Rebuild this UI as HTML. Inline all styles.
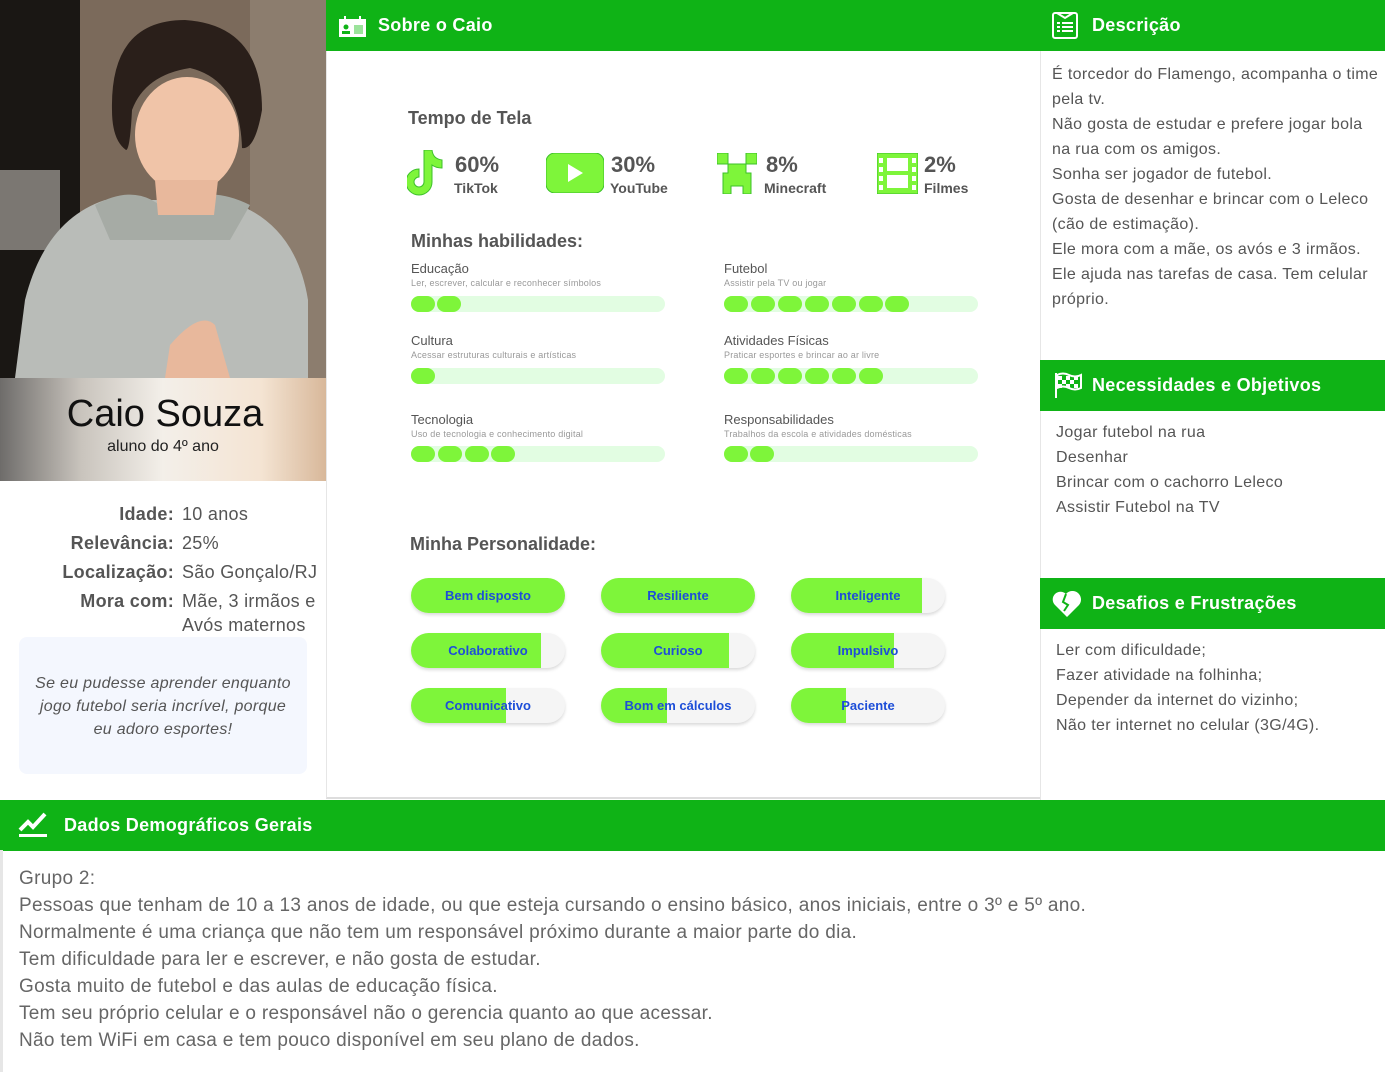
<!DOCTYPE html>
<html><head><meta charset="utf-8"><style>
*{margin:0;padding:0;box-sizing:border-box}
body{width:1385px;height:1072px;position:relative;background:#fff;font-family:"Liberation Sans","DejaVu Sans",sans-serif;color:#555;overflow:hidden}
.a{position:absolute}
.hdr{position:absolute;background:#0fb316;color:#fff;font-weight:bold;font-size:18px;height:51px;display:flex;align-items:center;letter-spacing:.3px}
.trk{position:absolute;width:254px;height:16px;border-radius:8px;background:#e2fde2}
.dot{position:absolute;top:0;width:24px;height:16px;border-radius:8px;background:#7ef53a}
.sk{position:absolute;font-size:13px;color:#555}
.sk small{display:block;font-size:9px;color:#999;margin-top:2px;letter-spacing:.2px}
.pill{position:absolute;width:154px;height:35px;border-radius:18px;background:#f5f5f5;overflow:hidden;box-shadow:0 2px 3px rgba(0,0,0,.15)}
.pill i{position:absolute;left:0;top:0;bottom:0;background:#7ef53a}
.pill span{position:absolute;left:0;right:0;top:0;line-height:35px;text-align:center;color:#1d4ed8;font-size:13px;font-weight:bold}
.txt{font-size:16px;line-height:25px;color:#555;letter-spacing:.35px}
.st{position:absolute;font-weight:bold;color:#555}
</style></head><body>

<svg class="a" style="left:0;top:0" width="326" height="378" viewBox="0 0 326 378">
<rect width="326" height="378" fill="#6a5a4c"/>
<rect width="80" height="378" fill="#1a1714"/>
<rect x="0" y="170" width="60" height="80" fill="#bdb8b0" opacity=".6"/>
<rect x="80" width="246" height="378" fill="#7b6a5b"/>
<rect x="250" width="76" height="378" fill="#8c7d6e"/>
<path d="M15 378 L25 300 Q45 220 105 200 L225 200 Q295 220 308 300 L308 378Z" fill="#b9bcb8"/>
<path d="M95 205 Q140 180 170 215 Q200 180 250 205 L230 240 L110 240Z" fill="#a6aba5"/>
<ellipse cx="187" cy="135" rx="52" ry="58" fill="#f0c4a8"/>
<path d="M112 110 Q110 20 185 20 Q262 25 262 110 Q255 150 242 148 Q240 80 190 68 Q145 75 132 110 Q130 150 126 150 Q112 140 112 110Z" fill="#2a1f1a"/>
<path d="M155 180 L218 180 L214 215 L158 215Z" fill="#e8b89c"/>
<path d="M170 345 Q200 310 215 325 L230 378 L165 378Z" fill="#e8b89c"/>
</svg>
<div class="a" style="left:0;top:378px;width:326px;height:103px;background:linear-gradient(90deg,#6e6c6a 0%,#c9c4bd 25%,#f3efe9 50%,#f4e4d3 80%,#d8b89a 100%)"></div>
<div class="a" style="left:0;top:393px;width:330px;text-align:center;font-size:38px;color:#111">Caio Souza</div>
<div class="a" style="left:0;top:438px;width:326px;text-align:center;font-size:16px;color:#222">aluno do 4º ano</div>

<div class="a" style="left:0;top:500px;width:174px;text-align:right;font-size:18px;line-height:29px;font-weight:bold;color:#555;letter-spacing:.3px">Idade:<br>Relevância:<br>Localização:<br>Mora com:</div>
<div class="a" style="left:182px;top:500px;width:150px;font-size:18px;line-height:29px;color:#555;letter-spacing:.3px">10 anos<br>25%<br>São Gonçalo/RJ<br>Mãe, 3 irmãos e<br><span style="position:relative;top:-5px">Avós maternos</span></div>
<div class="a" style="left:19px;top:637px;width:288px;height:137px;background:#f4f7fe;border-radius:8px;font-style:italic;font-size:16px;line-height:23px;text-align:center;padding:35px 14px 0;color:#555;letter-spacing:.3px">Se eu pudesse aprender enquanto jogo futebol seria incrível, porque eu adoro esportes!</div>

<div class="hdr" style="left:326px;top:0;width:714px;padding-left:52px">Sobre o Caio</div>
<svg class="a" style="left:339px;top:16px" width="28" height="22" viewBox="0 0 28 22"><rect x="0" y="3" width="27" height="18" fill="#fff"/><rect x="5" y="0" width="2" height="5" fill="#fff"/><rect x="20" y="0" width="2" height="5" fill="#fff"/><circle cx="7" cy="11" r="2.5" fill="#0fb316"/><rect x="3" y="15" width="8" height="3" fill="#0fb316"/><rect x="15" y="9" width="9" height="9" fill="#9be39b"/></svg>
<div class="a" style="left:326px;top:51px;width:714px;height:748px;border-left:1px solid #e6e6e6;border-bottom:2px solid #ddd"></div>

<div class="st" style="left:408px;top:108px;font-size:18px">Tempo de Tela</div>
<svg class="a" style="left:407px;top:150px" width="40" height="46" viewBox="0 0 40 46"><path d="M17 0h8q1 9 10 10v8q-6 0-10-3v17a13 13 0 1 1-13-13v8a5 5 0 1 0 5 5z" fill="#7ef53a" stroke="#3cc02a" stroke-width="1"/></svg>
<div class="st" style="left:455px;top:152px;font-size:22px">60%</div><div class="st" style="left:454px;top:180px;font-size:14px">TikTok</div>
<svg class="a" style="left:546px;top:153px" width="58" height="40" viewBox="0 0 58 40"><rect width="58" height="40" rx="9" fill="#7ef53a" stroke="#3cc02a"/><path d="M22 11l15 9-15 9z" fill="#fff"/></svg>
<div class="st" style="left:611px;top:152px;font-size:22px">30%</div><div class="st" style="left:610px;top:180px;font-size:14px">YouTube</div>
<svg class="a" style="left:717px;top:153px" width="40" height="41" viewBox="0 0 40 41"><path d="M0 0h11v11h-11zM29 0h11v11h-11zM11 11h18v9h5v21h-8v-8h-12v8h-8v-21h5z" fill="#7ef53a" stroke="#3cc02a"/></svg>
<div class="st" style="left:766px;top:152px;font-size:22px">8%</div><div class="st" style="left:764px;top:180px;font-size:14px">Minecraft</div>
<svg class="a" style="left:877px;top:153px" width="41" height="41" viewBox="0 0 41 41"><rect width="41" height="41" fill="#7ef53a" stroke="#3cc02a"/><rect x="10" y="5" width="21" height="13" fill="#fff"/><rect x="10" y="22" width="21" height="13" fill="#fff"/><g fill="#fff"><rect x="2" y="5" width="4" height="5"/><rect x="2" y="14" width="4" height="5"/><rect x="2" y="23" width="4" height="5"/><rect x="2" y="32" width="4" height="5"/><rect x="35" y="5" width="4" height="5"/><rect x="35" y="14" width="4" height="5"/><rect x="35" y="23" width="4" height="5"/><rect x="35" y="32" width="4" height="5"/></g></svg>
<div class="st" style="left:924px;top:152px;font-size:22px">2%</div><div class="st" style="left:924px;top:180px;font-size:14px">Filmes</div>

<div class="st" style="left:411px;top:231px;font-size:18px">Minhas habilidades:</div>

<div class="sk" style="left:411px;top:261px">Educação<small>Ler, escrever, calcular e reconhecer símbolos</small></div>
<div class="trk" style="left:411px;top:296px"><div class="dot" style="left:0"></div><div class="dot" style="left:26px"></div></div>
<div class="sk" style="left:724px;top:261px">Futebol<small>Assistir pela TV ou jogar</small></div>
<div class="trk" style="left:724px;top:296px"><div class="dot" style="left:0"></div><div class="dot" style="left:27px"></div><div class="dot" style="left:54px"></div><div class="dot" style="left:81px"></div><div class="dot" style="left:108px"></div><div class="dot" style="left:135px"></div><div class="dot" style="left:161px"></div></div>

<div class="sk" style="left:411px;top:333px">Cultura<small>Acessar estruturas culturais e artísticas</small></div>
<div class="trk" style="left:411px;top:368px"><div class="dot" style="left:0"></div></div>
<div class="sk" style="left:724px;top:333px">Atividades Físicas<small>Praticar esportes e brincar ao ar livre</small></div>
<div class="trk" style="left:724px;top:368px"><div class="dot" style="left:0"></div><div class="dot" style="left:27px"></div><div class="dot" style="left:54px"></div><div class="dot" style="left:81px"></div><div class="dot" style="left:108px"></div><div class="dot" style="left:135px"></div></div>

<div class="sk" style="left:411px;top:412px">Tecnologia<small>Uso de tecnologia e conhecimento digital</small></div>
<div class="trk" style="left:411px;top:446px"><div class="dot" style="left:0"></div><div class="dot" style="left:27px"></div><div class="dot" style="left:54px"></div><div class="dot" style="left:80px"></div></div>
<div class="sk" style="left:724px;top:412px">Responsabilidades<small>Trabalhos da escola e atividades domésticas</small></div>
<div class="trk" style="left:724px;top:446px"><div class="dot" style="left:0"></div><div class="dot" style="left:26px"></div></div>

<div class="st" style="left:410px;top:534px;font-size:18px">Minha Personalidade:</div>
<div class="pill" style="left:411px;top:578px"><i style="width:154px"></i><span>Bem disposto</span></div>
<div class="pill" style="left:601px;top:578px"><i style="width:154px"></i><span>Resiliente</span></div>
<div class="pill" style="left:791px;top:578px"><i style="width:131px"></i><span>Inteligente</span></div>
<div class="pill" style="left:411px;top:633px"><i style="width:130px"></i><span>Colaborativo</span></div>
<div class="pill" style="left:601px;top:633px"><i style="width:128px"></i><span>Curioso</span></div>
<div class="pill" style="left:791px;top:633px"><i style="width:103px"></i><span>Impulsivo</span></div>
<div class="pill" style="left:411px;top:688px"><i style="width:95px"></i><span>Comunicativo</span></div>
<div class="pill" style="left:601px;top:688px"><i style="width:66px"></i><span>Bom em cálculos</span></div>
<div class="pill" style="left:791px;top:688px"><i style="width:55px"></i><span>Paciente</span></div>

<div class="a" style="left:1040px;top:0;width:1px;height:800px;background:#e6e6e6"></div>
<div class="hdr" style="left:1040px;top:0;width:345px;padding-left:52px">Descrição</div>
<svg class="a" style="left:1052px;top:12px" width="26" height="27" viewBox="0 0 26 27"><rect x="1" y="1" width="24" height="25" rx="2" fill="none" stroke="#fff" stroke-width="2"/><path d="M5 1l8 5 8-5" fill="none" stroke="#fff" stroke-width="2"/><path d="M5 11h3M10 11h11M5 15h3M10 15h11M5 19h3M10 19h11" stroke="#fff" stroke-width="2"/></svg>
<div class="a txt" style="left:1052px;top:62px;width:330px">É torcedor do Flamengo, acompanha o time pela tv.<br>Não gosta de estudar e prefere jogar bola na rua com os amigos.<br>Sonha ser jogador de futebol.<br>Gosta de desenhar e brincar com o Leleco (cão de estimação).<br>Ele mora com a mãe, os avós e 3 irmãos.<br>Ele ajuda nas tarefas de casa. Tem celular próprio.</div>

<div class="hdr" style="left:1040px;top:360px;width:345px;padding-left:52px">Necessidades e Objetivos</div>
<svg class="a" style="left:1054px;top:372px" width="28" height="26" viewBox="0 0 28 26"><path d="M2 1v25" stroke="#fff" stroke-width="2"/><path d="M3 3q6-3 12 0t12 0v13q-6 3-12 0t-12 0z" fill="none" stroke="#fff" stroke-width="2"/><g fill="#fff"><rect x="4" y="4" width="4" height="4"/><rect x="12" y="4" width="4" height="4"/><rect x="20" y="4" width="4" height="4"/><rect x="8" y="8" width="4" height="4"/><rect x="16" y="8" width="4" height="4"/><rect x="4" y="12" width="4" height="4"/><rect x="12" y="12" width="4" height="4"/><rect x="20" y="12" width="4" height="4"/></g></svg>
<div class="a txt" style="left:1056px;top:420px">Jogar futebol na rua<br>Desenhar<br>Brincar com o cachorro Leleco<br>Assistir Futebol na TV</div>

<div class="hdr" style="left:1040px;top:578px;width:345px;padding-left:52px">Desafios e Frustrações</div>
<svg class="a" style="left:1052px;top:591px" width="30" height="26" viewBox="0 0 30 26"><path d="M15 26L3 14A7.5 7.5 0 0 1 14 3l-3 8 5 3-4 6 3-6-5-3 4-8A7.5 7.5 0 0 1 27 14z" fill="#fff"/><path d="M14 3l-3 8 5 3-4 6" fill="none" stroke="#0fb316" stroke-width="2"/></svg>
<div class="a txt" style="left:1056px;top:638px">Ler com dificuldade;<br>Fazer atividade na folhinha;<br>Depender da internet do vizinho;<br>Não ter internet no celular (3G/4G).</div>

<div class="hdr" style="left:0;top:800px;width:1385px;padding-left:64px">Dados Demográficos Gerais</div>
<svg class="a" style="left:18px;top:810px" width="30" height="28" viewBox="0 0 30 28"><path d="M2 20l8-8 5 5 12-13" fill="none" stroke="#fff" stroke-width="4"/><rect x="1" y="24" width="28" height="3" fill="#fff"/></svg>
<div class="a" style="left:0;top:850px;width:1385px;height:222px;border-left:3px solid #e6e6e6"></div>
<div class="a" style="left:19px;top:865px;font-size:19px;line-height:27px;color:#666;letter-spacing:.3px">Grupo 2:<br>Pessoas que tenham de 10 a 13 anos de idade, ou que esteja cursando o ensino básico, anos iniciais, entre o 3º e 5º ano.<br>Normalmente é uma criança que não tem um responsável próximo durante a maior parte do dia.<br>Tem dificuldade para ler e escrever, e não gosta de estudar.<br>Gosta muito de futebol e das aulas de educação física.<br>Tem seu próprio celular e o responsável não o gerencia quanto ao que acessar.<br>Não tem WiFi em casa e tem pouco disponível em seu plano de dados.</div>
</body></html>
